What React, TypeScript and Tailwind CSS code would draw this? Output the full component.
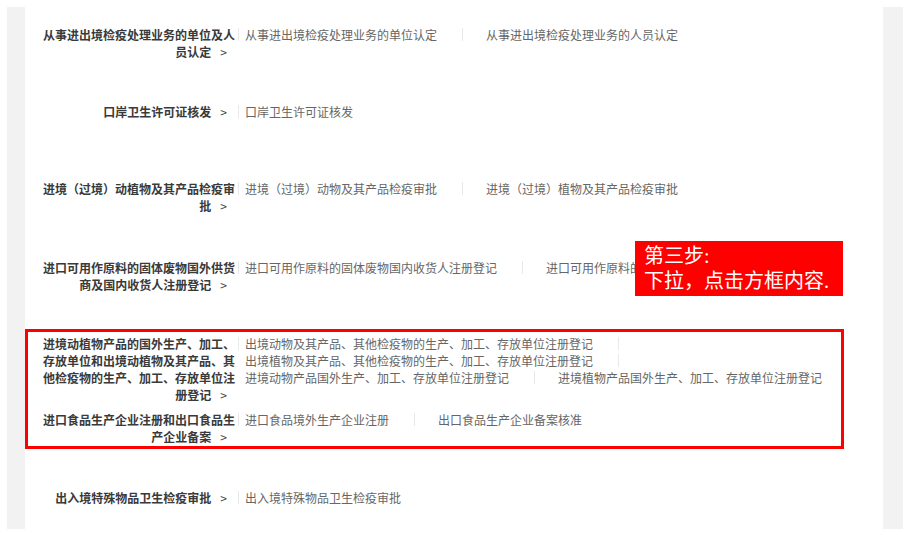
const rows = [
  {
    label: "从事进出境检疫处理业务的单位及人员认定",
    items: ["从事进出境检疫处理业务的单位认定", "从事进出境检疫处理业务的人员认定"],
    h: "h-[77px]",
  },
  { label: "口岸卫生许可证核发", items: ["口岸卫生许可证核发"], h: "h-[77px]" },
  {
    label: "进境（过境）动植物及其产品检疫审批",
    items: ["进境（过境）动物及其产品检疫审批", "进境（过境）植物及其产品检疫审批"],
    h: "h-[79px]",
  },
  {
    label: "进口可用作原料的固体废物国外供货商及国内收货人注册登记",
    items: ["进口可用作原料的固体废物国内收货人注册登记", "进口可用作原料的固体废物国外供货商注册登记"],
    h: "h-[76px]",
  },
  {
    label: "进境动植物产品的国外生产、加工、存放单位和出境动植物及其产品、其他检疫物的生产、加工、存放单位注册登记",
    items: [
      "出境动物及其产品、其他检疫物的生产、加工、存放单位注册登记",
      "出境植物及其产品、其他检疫物的生产、加工、存放单位注册登记",
      "进境动物产品国外生产、加工、存放单位注册登记",
      "进境植物产品国外生产、加工、存放单位注册登记",
    ],
    h: "h-[76px]",
  },
  {
    label: "进口食品生产企业注册和出口食品生产企业备案",
    items: ["进口食品境外生产企业注册", "出口食品生产企业备案核准"],
    h: "h-[78px]",
  },
  { label: "出入境特殊物品卫生检疫审批", items: ["出入境特殊物品卫生检疫审批"], h: "h-[60px]" },
];

const font = { fontFamily: "'Noto Sans CJK SC', 'Noto Sans', sans-serif" };

export default function App() {
  return (
    <div className="relative w-[912px] h-[550px] bg-white overflow-hidden" style={font}>
      <div className="flex pt-[7px] pl-[7px] pr-[9px]">
        {/* left rail */}
        <div className="w-[18px] h-[522px] bg-[#f2f2f2]" />

        {/* list */}
        <div className="flex-1 pt-[19px] pl-[18px] pr-[12px]">
          {rows.map((r) => (
            <div key={r.label} className={`flex items-start ${r.h}`}>
              <div className="w-[192px] shrink-0 text-right text-[12px] leading-[17px] font-bold text-[#3a3a3a]">
                {r.label}
                <span className="inline-block ml-[9px] mr-[8px] font-normal text-[#444]">&gt;</span>
              </div>
              <div className="ml-[3px] mt-[2px] w-px h-[13px] bg-[#e8e8e8] shrink-0" />
              <div className="ml-[6px] flex flex-wrap flex-1 text-[12px] leading-[17px] text-[#666]">
                {r.items.map((it, i) => (
                  <div key={it} className="flex items-center whitespace-nowrap">
                    <span>{it}</span>
                    {i < r.items.length - 1 && (
                      <span className="ml-[25px] mr-[23px] w-px h-[13px] bg-[#e8e8e8]" />
                    )}
                  </div>
                ))}
              </div>
            </div>
          ))}
        </div>

        {/* right rail */}
        <div className="w-[20px] h-[522px] bg-[#f2f2f2]" />
      </div>

      {/* annotation: highlight box */}
      <div className="absolute left-[25px] top-[329px] w-[819px] h-[120px] border-[3px] border-[#ff0000]" />

      {/* annotation: callout */}
      <div
        className="absolute left-[635px] top-[241px] w-[208px] h-[55px] bg-[#ff0000] pl-[9px] pt-[3px] text-white text-[20px] leading-[25px]"
        style={{ fontFamily: "'Liberation Serif', 'Noto Sans CJK SC', serif" }}
      >
        <div>第三步:</div>
        <div>下拉，点击方框内容.</div>
      </div>
    </div>
  );
}
